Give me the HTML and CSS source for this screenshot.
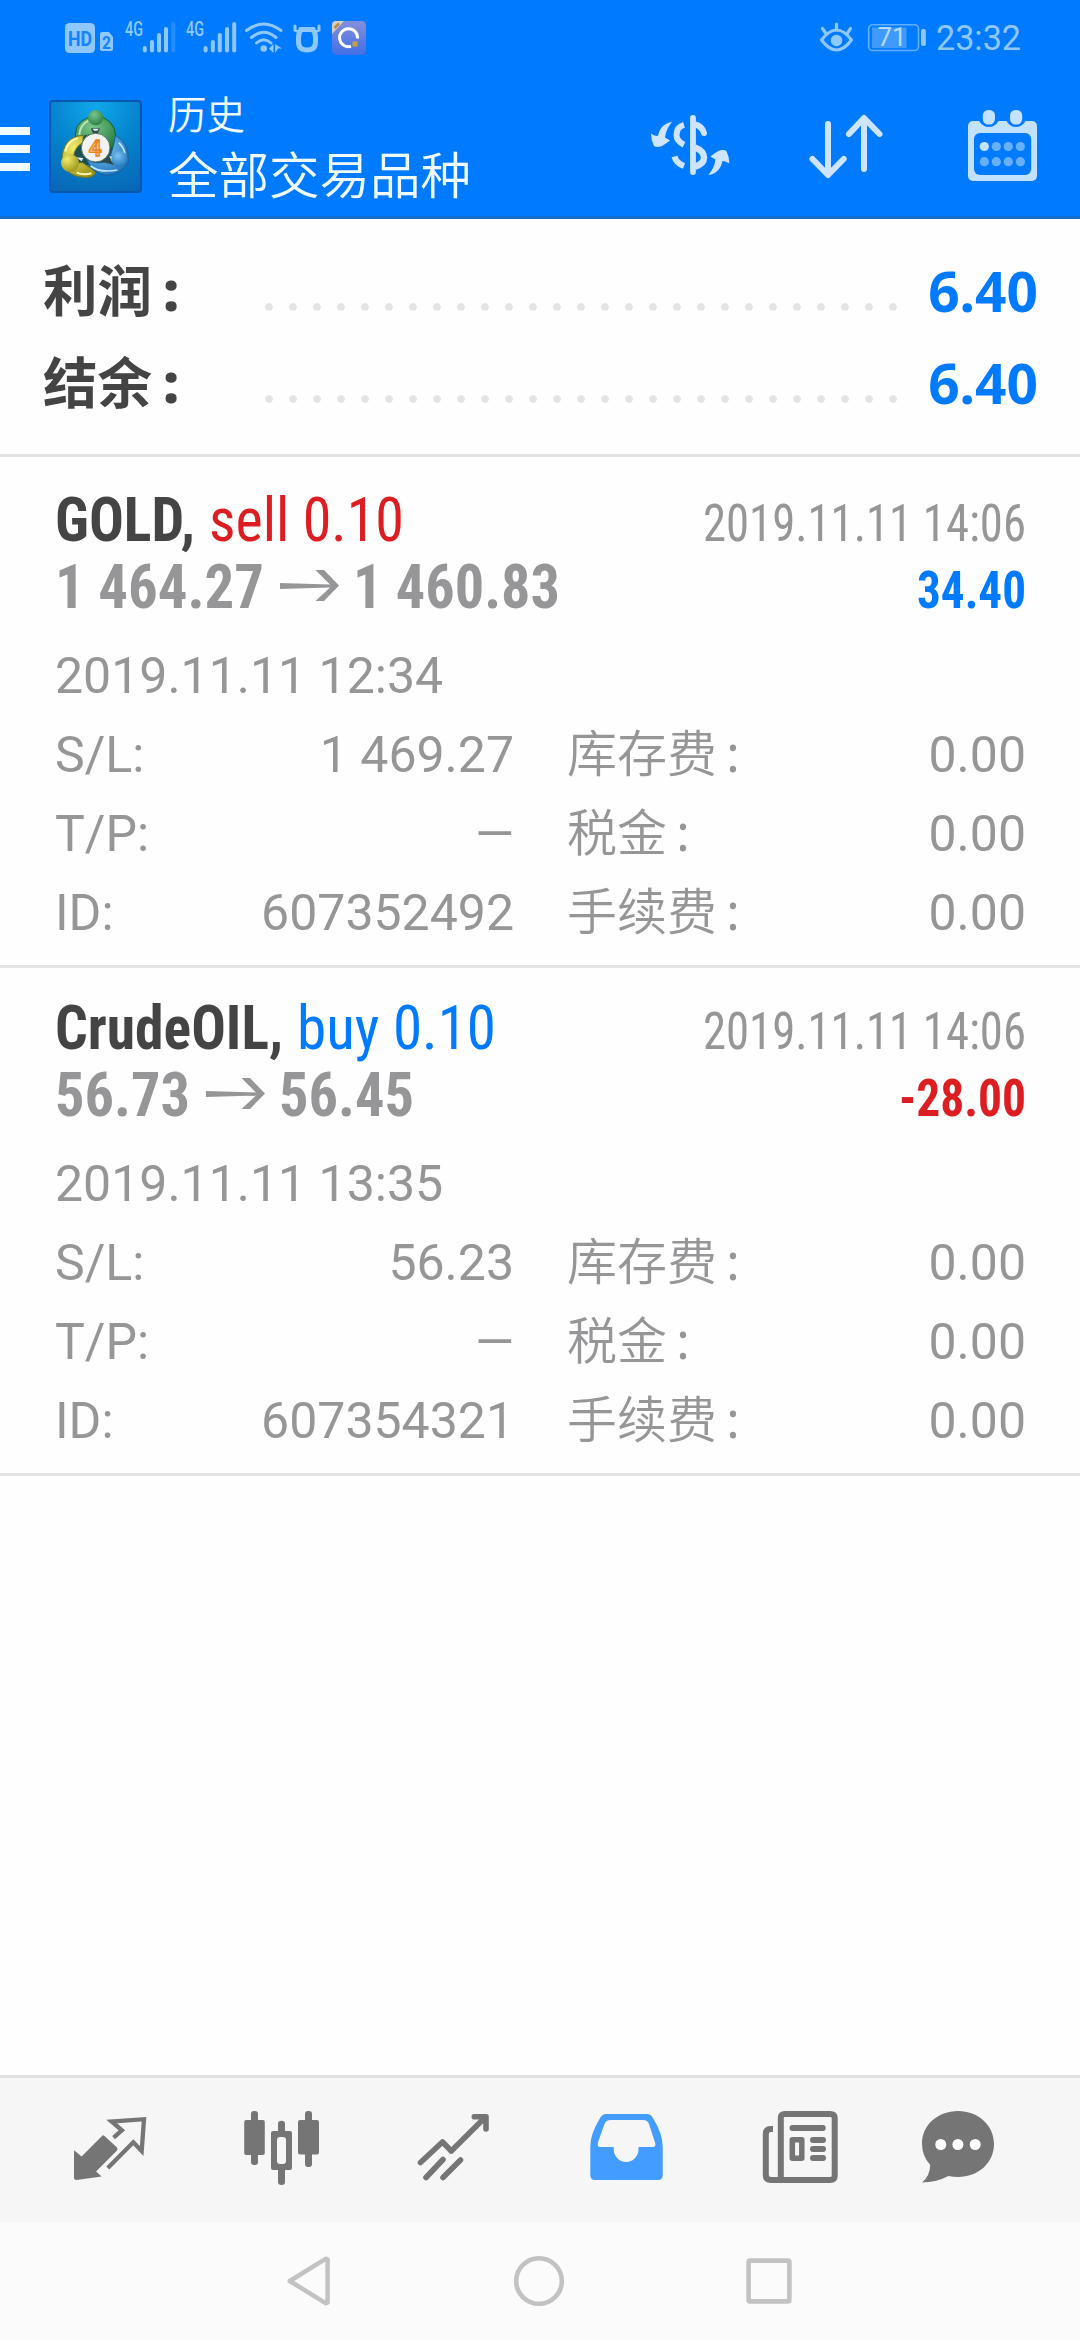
FILE: index.html
```html
<!DOCTYPE html>
<html lang="zh-CN">
<head>
<meta charset="utf-8">
<title>历史</title>
<link rel="stylesheet" href="styles.css">
</head>
<body>
<div class="screen">
  <header class="top">
    <div class="status">
      <svg class="status-left" viewBox="65 18 305 40" width="305" height="40">
        <g fill="#8fc7ff">
          <rect x="65" y="23" width="30" height="30" rx="4.500"/>
          <path d="M102 32H109L113 37V49Q113 51 111 51H102Q100 51 100 49V34Q100 32 102 32Z"/>
          <rect x="142.800" y="46" width="4" height="6.500" rx="2"/><rect x="150" y="40" width="4" height="12.500" rx="2"/><rect x="157" y="33" width="4" height="19.500" rx="2"/><rect x="164" y="27" width="4" height="25.500" rx="2"/><rect x="171.300" y="22" width="4" height="30.500" rx="2" opacity=".25"/>
          <rect x="203.600" y="46" width="4" height="6.500" rx="2"/><rect x="210.800" y="40" width="4" height="12.500" rx="2"/><rect x="217.800" y="33" width="4" height="19.500" rx="2"/><rect x="225" y="27" width="4" height="25.500" rx="2"/><rect x="232.200" y="22" width="4" height="30.500" rx="2"/>
          <circle cx="263.700" cy="48.500" r="3.300"/>
          <path d="M269 48.500L273.500 44V53ZM275 44L282 48.500H278L275 53Z"/>
        </g>
        <g fill="none" stroke="#8fc7ff" stroke-width="3" stroke-linecap="round">
          <path d="M246.500 30.500Q263.700 17.500 281 30.500M251.500 37.500Q263.700 27 276 37.500M256.500 43Q263.700 36.500 271 43"/>
          <path d="M301 29.500H313Q315.500 33 315.500 38V42Q315.500 50 307 50Q298.500 50 298.500 42V38Q298.500 33 301 29.500Z" stroke-width="5"/>
          <path d="M295 26V30L299 32M319 26V30L315 32" stroke-width="3"/>
        </g>
        <text x="68" y="46" class="s-hd" textLength="24" lengthAdjust="spacingAndGlyphs">HD</text>
        <text x="102" y="49" class="s-two" textLength="9" lengthAdjust="spacingAndGlyphs">2</text>
        <text x="125" y="36" class="s-net" textLength="18" lengthAdjust="spacingAndGlyphs">4G</text>
        <text x="186" y="36" class="s-net" textLength="18" lengthAdjust="spacingAndGlyphs">4G</text>
        <defs><linearGradient id="app" x1="0" y1="0" x2="0" y2="1"><stop offset="0" stop-color="#8290dc"/><stop offset="1" stop-color="#426ee6"/></linearGradient></defs>
        <rect x="332" y="21" width="34" height="34" rx="4.500" fill="url(#app)"/>
        <path d="M332 34V25Q332 21 336 21H344Z" fill="#d9cdbd"/>
        <path d="M334.500 28L339 23.500" stroke="#b98a45" stroke-width="2.500"/>
        <path d="M351 46.300A9 9 0 1 1 357.500 38.500" fill="none" stroke="#fff" stroke-width="3"/>
        <rect x="352.500" y="41.500" width="5" height="5" fill="#c6a23f"/>
      </svg>
      <svg class="status-right" viewBox="818 18 204 40" width="204" height="40">
        <g fill="none" stroke="#8fc7ff" stroke-width="3.200" stroke-linecap="round">
          <path d="M821.500 40Q836.500 20 851.500 40Q836.500 60 821.500 40Z" stroke-linejoin="round"/>
          <path d="M836.500 24V30M822.500 28.500L825.500 33M850.500 28.500L847.500 33"/>
        </g>
        <circle cx="836.500" cy="40.500" r="5.800" fill="#8fc7ff"/>
        <rect x="868.700" y="24.700" width="49.800" height="25.800" rx="4" fill="none" stroke="#5fb0ff" stroke-width="1.600"/>
        <rect x="872" y="27.500" width="34.500" height="20.500" fill="#4099ff"/>
        <rect x="921" y="29" width="4.800" height="17" rx="1.800" fill="#8fc7ff"/>
        <text x="877.500" y="46" class="s-bat" textLength="29" lengthAdjust="spacingAndGlyphs">71</text>
        <text x="936" y="50" class="s-clock" textLength="85" lengthAdjust="spacingAndGlyphs">23:32</text>
      </svg>
    </div>
    <div class="bar">
      <div class="burger"><i></i><i></i><i></i></div>
      <svg class="logo" viewBox="27 30 279 279" width="93" height="93">
        <defs>
          <radialGradient id="bg" cx=".5" cy=".05" r="1"><stop offset="0" stop-color="#10a8ea"/><stop offset=".5" stop-color="#0583cc"/><stop offset="1" stop-color="#0868b8"/></radialGradient>
          <radialGradient id="gr" cx=".4" cy=".3" r=".8"><stop offset="0" stop-color="#7cc58a"/><stop offset="1" stop-color="#1f7a3c"/></radialGradient>
          <radialGradient id="ye" cx=".35" cy=".3" r=".8"><stop offset="0" stop-color="#f3ea6c"/><stop offset="1" stop-color="#969014"/></radialGradient>
          <radialGradient id="bl" cx=".4" cy=".3" r=".8"><stop offset="0" stop-color="#7cc3ef"/><stop offset="1" stop-color="#176fb8"/></radialGradient>
        </defs>
        <rect x="30" y="33" width="273" height="273" rx="9" fill="url(#bg)" stroke="#0758ae" stroke-width="6"/>
        <path d="M110 140Q165 90 224 140L220 235L167 225L95 225Z" fill="#1d4f55"/>
        <path d="M107 158Q98 100 142 84H192Q234 100 228 175L205 172Q200 140 165 135Q125 130 107 158Z" fill="url(#gr)" stroke="#145f35" stroke-width="3"/>
        <path d="M118 135Q120 105 145 92" fill="none" stroke="#bce6b4" stroke-width="6"/>
        <path d="M130 136Q65 140 66 215L100 200Q105 170 128 158ZM66 220Q85 262 140 263Q165 260 168 245L128 218Z" fill="url(#ye)" stroke="#70731c" stroke-width="3"/>
        <path d="M76 185Q83 152 114 145M110 248Q130 257 155 250" fill="none" stroke="#fbf6b0" stroke-width="6"/>
        <path d="M226 136Q268 158 265 215Q245 255 198 256Q155 250 140 208Q170 226 205 213Q222 170 226 136Z" fill="url(#bl)" stroke="#145c9c" stroke-width="3"/>
        <path d="M152 228Q180 250 232 240M236 158Q254 175 255 195" fill="none" stroke="#c4e6fb" stroke-width="5"/>
        <path d="M185 215L216 196L222 225ZM153 115H180L172 134H160Z" fill="#2c4a49"/>
        <path d="M108 202L130 204L125 214ZM208 198L228 202L215 214ZM158 116H176L172 122H162Z" fill="#dceef5"/>
        <circle cx="167" cy="83" r="23" fill="url(#gr)"/>
        <circle cx="90" cy="219" r="27" fill="url(#ye)"/>
        <circle cx="238" cy="207" r="24" fill="url(#bl)"/>
        <circle cx="167" cy="173" r="43" fill="#f2f2f2" stroke="#55705a" stroke-width="3"/>
        <text x="166" y="199" text-anchor="middle" class="four">4</text>
      </svg>
      <div class="titles"><div class="t1">历史</div><div class="t2">全部交易品种</div></div>
      <svg class="i-swap" viewBox="650 114 81 63" width="81" height="63">
        <path fill="#cfe5ff" d="M672 122C664 123 659 129 658 136Q654 136 651 133.500Q651 140 654 146Q657 148 662 146Q667 143 670 140.500L665 137.500Q666 129 672 122Z"/>
        <path transform="rotate(180 690.200 148.500)" fill="#cfe5ff" d="M672 122C664 123 659 129 658 136Q654 136 651 133.500Q651 140 654 146Q657 148 662 146Q667 143 670 140.500L665 137.500Q666 129 672 122Z"/>
        <g fill="none" stroke="#cfe5ff">
          <path d="M693 118V172" stroke-width="5.800" stroke-linecap="round"/>
          <path d="M684 124.800Q676.500 127 676.500 135Q676.500 141 684 144.700M674.500 156.500Q676 163 684 166" stroke-width="6"/>
          <circle cx="674.500" cy="156.500" r=".01" stroke-width="6" stroke-linecap="round"/>
          <path d="M695 124.500Q702 126 704 133" stroke-width="6" stroke-linecap="round"/>
          <path d="M695 147.500Q704 151 704 157.500Q704 164 695 166.500" stroke-width="6.500"/>
        </g>
      </svg>
      <svg class="i-sort" viewBox="808 114 76 65" width="76" height="65">
        <path d="M828 124V174M812.500 159L828 175L843.700 159M864 169V119M849 134L864 118L879.500 134" fill="none" stroke="#cfe5ff" stroke-width="6" stroke-linecap="round" stroke-linejoin="round"/>
      </svg>
      <svg class="i-cal" viewBox="968 110 69 71" width="69" height="71">
        <rect x="968" y="121" width="69" height="60" rx="5" fill="#c3e2ff"/>
        <path d="M979 118V121Q983 127 989 127Q995 127 998.500 121H1006.500Q1010 127 1016 127Q1022 127 1025.500 121V118Z" fill="#007aff"/>
        <rect x="974" y="133" width="57.200" height="42" rx="6" fill="#007aff"/>
        <rect x="982.800" y="110" width="12.200" height="14.500" rx="5.500" fill="#c3e2ff"/><rect x="1010" y="110" width="12.200" height="14.500" rx="5.500" fill="#c3e2ff"/>
        <g fill="#66b0ff"><circle cx="984.300" cy="146.500" r="4.600" fill="#c3e2ff"/><circle cx="996.300" cy="146.500" r="4.600"/><circle cx="1008.300" cy="146.500" r="4.600"/><circle cx="1020.400" cy="146.500" r="4.600"/><circle cx="984.300" cy="161.700" r="4.600"/><circle cx="996.300" cy="161.700" r="4.600"/><circle cx="1008.300" cy="161.700" r="4.600"/><circle cx="1020.400" cy="161.700" r="4.600"/></g>
      </svg>
    </div>
  </header>

  <section class="summary">
    <div class="sum"><span class="sum-k">利润<b class="colon">:</b></span><span class="dots"></span><span class="sum-v">6.40</span></div>
    <div class="sum"><span class="sum-k">结余<b class="colon">:</b></span><span class="dots"></span><span class="sum-v">6.40</span></div>
  </section>

  <main class="deals">
    <article class="deal">
      <div class="line">
        <svg width="140" height="45"><text y="45" class="sym" textLength="140" lengthAdjust="spacingAndGlyphs">GOLD,</text></svg>
        <svg class="side" width="195" height="45"><text y="45" class="sell" textLength="195" lengthAdjust="spacingAndGlyphs">sell 0.10</text></svg>
        <svg class="end" width="323" height="45"><text y="45" class="time" textLength="323" lengthAdjust="spacingAndGlyphs">2019.11.11 14:06</text></svg>
      </div>
      <div class="line">
        <svg width="209" height="45"><text y="45" class="price" textLength="209" lengthAdjust="spacingAndGlyphs">1 464.27</text></svg>
        <svg class="arrow" width="59" height="45"><path d="M0 20L50 21.500L35.500 7H44L59 22.500L44 38H35.500L50 24.500L0 26Z" fill="#969698"/></svg>
        <svg width="207" height="45"><text y="45" class="price" textLength="207" lengthAdjust="spacingAndGlyphs">1 460.83</text></svg>
        <svg class="end" width="109" height="45"><text y="45" class="profit up" textLength="109" lengthAdjust="spacingAndGlyphs">34.40</text></svg>
      </div>
      <div class="opened">2019.11.11 12:34</div>
      <div class="grid">
        <div class="kv"><span>S/L:</span><span>1 469.27</span></div><div class="kv"><span class="cn">库存费<i class="colon">:</i></span><span>0.00</span></div>
        <div class="kv"><span>T/P:</span><span>—</span></div><div class="kv"><span class="cn">税金<i class="colon">:</i></span><span>0.00</span></div>
        <div class="kv"><span>ID:</span><span>607352492</span></div><div class="kv"><span class="cn">手续费<i class="colon">:</i></span><span>0.00</span></div>
      </div>
    </article>
    <article class="deal">
      <div class="line">
        <svg width="228" height="45"><text y="45" class="sym" textLength="228" lengthAdjust="spacingAndGlyphs">CrudeOIL,</text></svg>
        <svg class="side" width="199" height="45"><text y="45" class="buy" textLength="199" lengthAdjust="spacingAndGlyphs">buy 0.10</text></svg>
        <svg class="end" width="323" height="45"><text y="45" class="time" textLength="323" lengthAdjust="spacingAndGlyphs">2019.11.11 14:06</text></svg>
      </div>
      <div class="line">
        <svg width="135" height="45"><text y="45" class="price" textLength="135" lengthAdjust="spacingAndGlyphs">56.73</text></svg>
        <svg class="arrow" width="59" height="45"><path d="M0 20L50 21.500L35.500 7H44L59 22.500L44 38H35.500L50 24.500L0 26Z" fill="#969698"/></svg>
        <svg width="135" height="45"><text y="45" class="price" textLength="135" lengthAdjust="spacingAndGlyphs">56.45</text></svg>
        <svg class="end" width="127" height="45"><text y="45" class="profit down" textLength="127" lengthAdjust="spacingAndGlyphs">-28.00</text></svg>
      </div>
      <div class="opened">2019.11.11 13:35</div>
      <div class="grid">
        <div class="kv"><span>S/L:</span><span>56.23</span></div><div class="kv"><span class="cn">库存费<i class="colon">:</i></span><span>0.00</span></div>
        <div class="kv"><span>T/P:</span><span>—</span></div><div class="kv"><span class="cn">税金<i class="colon">:</i></span><span>0.00</span></div>
        <div class="kv"><span>ID:</span><span>607354321</span></div><div class="kv"><span class="cn">手续费<i class="colon">:</i></span><span>0.00</span></div>
      </div>
    </article>
  </main>

  <nav class="tabs">
    <svg class="tab-quotes" viewBox="72 2108 76 80" width="76" height="80">
      <path d="M113.600 2137.700L121.900 2130.300L111.600 2121.500L144 2119.200L141.700 2151L133.300 2142.300L107.800 2168" fill="none" stroke="#757575" stroke-width="4.300"/>
      <path d="M102 2136Q103 2134.500 104.500 2136L117 2147.500Q118 2149 117 2150.500L96.100 2171.500L101.600 2176.500L76.500 2180Q74 2180 74 2178V2150.300L81.600 2156.500Z" fill="#757575"/>
    </svg>
    <svg class="tab-chart" viewBox="243 2108 77 80" width="77" height="80" fill="#757575">
      <rect x="244.200" y="2120" width="20.600" height="35" rx="2"/><rect x="251" y="2111" width="7" height="54" rx="3"/>
      <path fill-rule="evenodd" d="M273 2131H290Q292 2131 292 2133V2168Q292 2170 290 2170H273Q271 2170 271 2168V2133Q271 2131 273 2131ZM280 2137Q277 2137 277 2140V2161Q277 2164 280 2164H283Q286 2164 286 2161V2140Q286 2137 283 2137Z"/>
      <path d="M278 2132V2124Q278 2120.700 281.500 2120.700Q285 2120.700 285 2124V2132ZM278 2169V2182Q278 2185 281.500 2185Q285 2185 285 2182V2169Z"/>
      <rect x="298" y="2120" width="21" height="34.500" rx="2"/><rect x="305" y="2111" width="7" height="56" rx="3"/>
    </svg>
    <svg class="tab-trade" viewBox="417 2108 74 80" width="74" height="80" fill="none" stroke="#757575" stroke-width="5.600" stroke-linecap="round" stroke-linejoin="round">
      <path d="M420.500 2162.500L442.500 2142L451.300 2151L485 2117.500M474.300 2116.700H486V2129M426 2177.500L443 2159.500M443 2177.500L460.500 2160"/>
      <path d="M480 2117H486V2123Z" stroke-width="4"/>
    </svg>
    <svg class="tab-history" viewBox="590 2108 73 80" width="73" height="80">
      <path fill="#439cff" fill-rule="evenodd" d="M606 2114H647Q651 2114 653.500 2119Q662.700 2134 662.700 2147V2175Q662.700 2180 658 2180H595Q590.300 2180 590.300 2175V2147Q590.300 2134 599.500 2119Q602 2114 606 2114ZM611 2120Q606 2120 604.500 2124L598 2142Q597 2147 600 2147H613.700V2149A12.400 13 0 0 0 638.500 2149V2147H653Q656 2147 655.200 2143L649 2124Q647.500 2120 643 2120Z"/>
    </svg>
    <svg class="tab-news" viewBox="762 2108 77 80" width="77" height="80">
      <path fill="#f6f6f6" stroke="#757575" stroke-width="6" d="M773 2129H771Q765.800 2129 765.800 2134V2175Q765.800 2180 771 2180H830Q834.700 2180 834.700 2176V2118Q834.700 2114 830 2114H785Q780.800 2114 780.800 2118V2180"/>
      <path d="M792.500 2128H822.800M813 2140H823M813 2149H823M813 2158H823" stroke="#757575" stroke-width="6" stroke-linecap="round"/>
      <rect x="792.300" y="2139.800" width="9.500" height="18.500" fill="none" stroke="#757575" stroke-width="5.500" stroke-linejoin="round"/>
    </svg>
    <svg class="tab-chat" viewBox="921 2108 74 80" width="74" height="80">
      <path fill="#757575" d="M930.200 2165Q922 2156 922 2143.500C922 2125 938 2111 958 2111S994 2125 994 2144S978 2177 958 2177Q953 2177 948.500 2176Q936 2182.500 922 2182.500Q930 2176 930.200 2165Z"/>
      <g fill="#fff"><circle cx="940.800" cy="2144.500" r="5.500"/><circle cx="957.900" cy="2144.500" r="5.500"/><circle cx="975.200" cy="2144.500" r="5.500"/></g>
    </svg>
  </nav>
  <footer class="sys">
    <svg viewBox="286 2253 46 56" width="46" height="56"><path d="M289.800 2281L326 2258.700L327.600 2259.500V2302.500L326 2303.300Z" fill="none" stroke="#c2c2c2" stroke-width="4.500" stroke-linejoin="round"/></svg>
    <svg viewBox="512 2253 56 56" width="56" height="56"><circle cx="540" cy="2281" r="22.800" fill="none" stroke="#c2c2c2" stroke-width="4.600"/></svg>
    <svg viewBox="745 2253 48 56" width="48" height="56"><rect x="748.600" y="2260.600" width="40.800" height="40.800" rx="1.500" fill="none" stroke="#c2c2c2" stroke-width="4.600"/></svg>
  </footer>
</div>
</body>
</html>
```
FILE: styles.css
```css
* { box-sizing: border-box; }
body { margin: 0; background: #fff; font-family: Roboto, "Noto Sans CJK SC", sans-serif; }
svg { display: block; overflow: visible; flex: none; }
i { font-style: normal; }
.screen { width: 1080px; height: 2340px; display: flex; flex-direction: column; background: #fefefe; overflow: hidden; }

/* header */
.top { height: 219px; background: #007aff; border-bottom: 3px solid #156cc8; }
.status { height: 76px; padding: 18px 58px 0 65px; display: flex; justify-content: space-between; }
.s-hd { font: 700 20px Roboto, sans-serif; fill: #1582ff; }
.s-two { font: 700 19px Roboto, sans-serif; fill: #1582ff; }
.s-net { font: 500 20px Roboto, sans-serif; fill: #8fc7ff; }
.s-bat { font: 400 26px Roboto, sans-serif; fill: #b5dbff; }
.s-clock { font: 400 34.5px Roboto, sans-serif; fill: #8fc7ff; }
.bar { height: 140px; display: flex; align-items: flex-start; }
.burger { width: 30px; margin-top: 51px; display: grid; gap: 10px; }
.burger i { height: 8px; background: #f0fbff; }
.logo { margin: 24px 0 0 19px; }
.four { font: 700 68px Roboto, sans-serif; fill: #f6c58c; stroke: #ee8420; stroke-width: 4px; }
.titles { width: 340px; margin-left: 26px; padding-top: 9px; color: #f0fbff; font-family: "Noto Sans CJK SC", sans-serif; font-weight: 350; white-space: nowrap; }
.t1 { font-size: 38.5px; line-height: 54px; }
.t2 { font-size: 50.5px; line-height: 66px; }
.i-swap { margin: 38px 0 0 142px; }
.i-sort { margin: 38px 0 0 77px; }
.i-cal { margin: 34px 0 0 84px; }

/* totals */
.summary { height: 238px; padding: 26px 42px 0 43px; border-bottom: 3px solid #e3e3e3; }
.sum { height: 92px; display: flex; line-height: 92px; }
.sum-k { width: 222px; font: 700 54.5px/86px "Noto Sans CJK SC", sans-serif; color: #444; }
.sum-k .colon { display: inline-block; margin-left: 3px; width: 32px; text-align: center; font-family: "Noto Sans", sans-serif; }
.dots { width: 632px; height: 8px; margin-top: 58px; background: radial-gradient(circle at 4px 4px, #e3e3e3 3.4px, transparent 4.200px) 0 0 / 24px 8px repeat-x; }
.sum-v { flex: 1; text-align: right; font: 700 55px/91px "Noto Sans", sans-serif; color: #007aff; }

/* deals */
.deals { flex: 1; padding-top: 3px; }
.deal { height: 508px; padding: 36px 54px 0 55px; border-bottom: 3px solid #e3e3e3; }
.line { display: flex; height: 45px; margin-bottom: 22px; font-stretch: 75%; }
.side { margin-left: 14px; }
.end { margin-left: auto; }
.arrow { margin: 0 14px 0 16px; }
.line text { font-family: "Roboto Condensed", Roboto, sans-serif; }
.sym { font-weight: 700; font-size: 61.5px; fill: #444; }
.sell { font-size: 61.5px; fill: #dc1e22; }
.buy { font-size: 61.5px; fill: #007aff; }
.price { font-weight: 700; font-size: 61.5px; fill: #969698; }
.time { font-size: 51px; fill: #969698; }
.profit { font-weight: 700; font-size: 51px; }
.up { fill: #007aff; }
.down { fill: #dc1e22; }
.opened { height: 79px; font-size: 50px; line-height: 79px; color: #969698; }
.line + .opened { margin-top: 29px; }
.line:nth-child(2) { margin-bottom: 0; }
.grid { display: grid; grid-template-columns: 459px 459px; column-gap: 53px; font-size: 50px; color: #969698; }
.kv { height: 79px; line-height: 79px; display: flex; justify-content: space-between; align-items: baseline; }
.cn { font-weight: 350; }
.cn .colon { display: inline-block; width: 32px; text-align: center; font: 400 50px/50px "Noto Sans", sans-serif; }

/* bottom bars */
.tabs { height: 147px; padding: 30px 0 0 72px; display: flex; background: #f6f6f6; border-top: 3px solid #e0e0e0; }
.tab-chart { margin-left: 95px; }
.tab-trade { margin-left: 97px; }
.tab-history, .tab-news { margin-left: 99px; }
.tab-chat { margin-left: 82px; }
.sys { height: 118px; padding: 31px 287px 0 286px; display: flex; justify-content: space-between; background: #fbfbfb; }
```
